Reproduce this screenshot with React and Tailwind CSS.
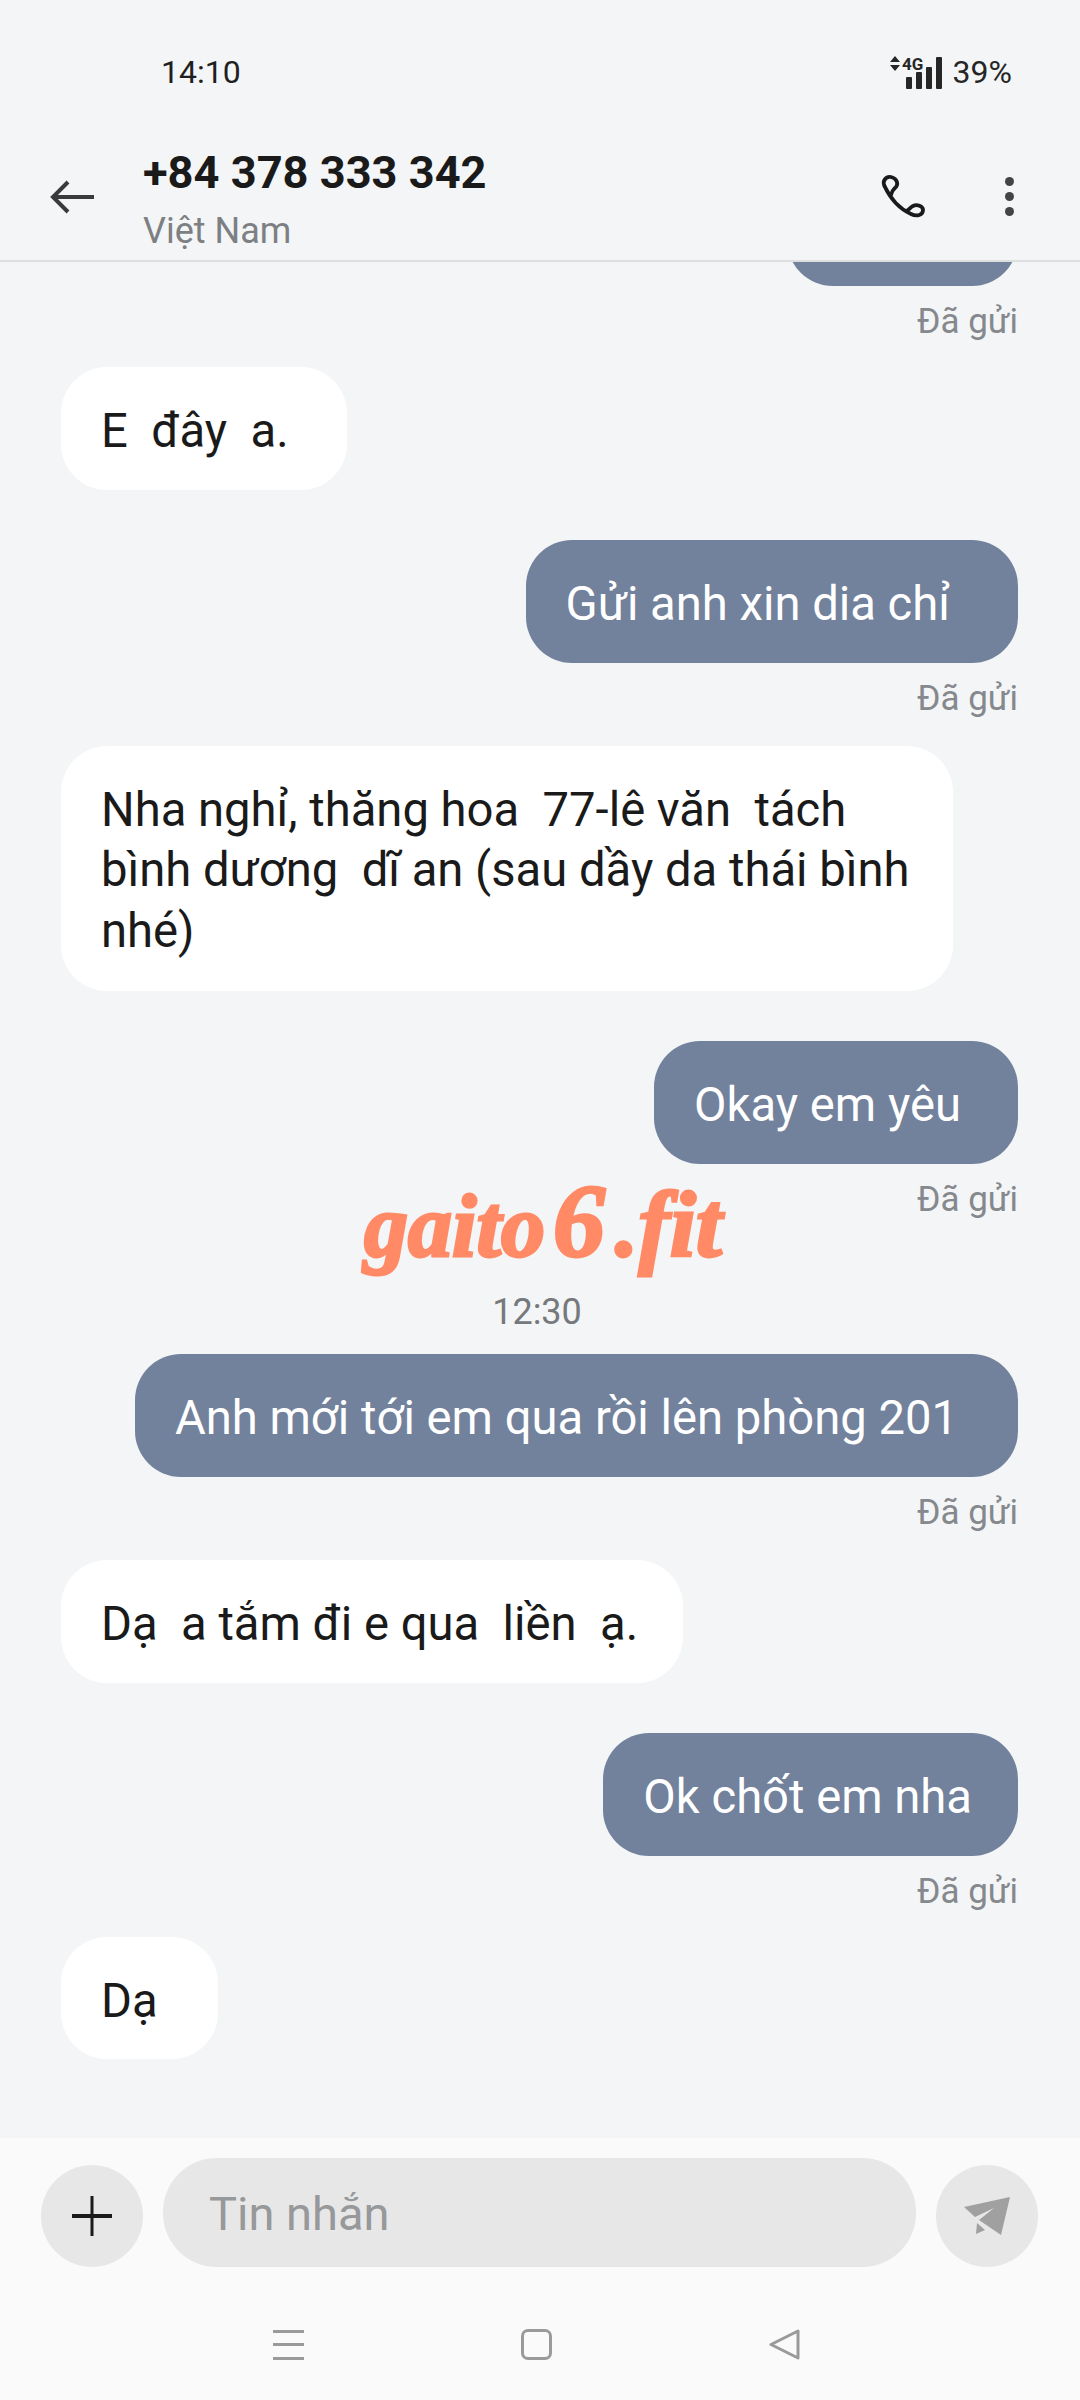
const font = "font-['Roboto','Noto_Sans',sans-serif]";

function Sent({ text, pad, first, tail = "mb-[25px]" }) {
  return (
    <div className={`flex flex-col items-end pr-[62px] ${first ? "" : "mt-[50px]"}`}>
      <div className={`h-[123px] whitespace-pre rounded-[46px] bg-[#72819c] pl-[40px] pt-[34px] text-[47.2px] leading-[60.5px] text-white ${pad}`}>
        {text}
      </div>
      <p className={`mt-[14px] text-[35px] leading-[44px] text-[#85888c] ${tail}`}>Đã gửi</p>
    </div>
  );
}

function Received({ text, pad }) {
  return (
    <div className="flex justify-start pl-[61px]">
      <div className={`whitespace-pre rounded-[46px] bg-white pl-[40px] pt-[34px] text-[47.2px] leading-[60.5px] text-[#1a1a1a] ${pad}`}>
        {text}
      </div>
    </div>
  );
}

function SignalIcon() {
  return (
    <svg width="56" height="34" viewBox="0 0 56 34" className="text-[#262626]" fill="currentColor">
      <path d="M1 7l5-6 5 6zM1 10h10l-5 6z" />
      <rect x="17" y="22" width="6" height="12" rx="1" />
      <rect x="27" y="17" width="6" height="17" rx="1" />
      <rect x="37" y="12" width="6" height="22" rx="1" />
      <rect x="47" y="2" width="6" height="32" rx="1" />
      <text x="13" y="15" fontSize="17" fontWeight="700" fontFamily="Roboto, sans-serif">4G</text>
    </svg>
  );
}

export default function App() {
  return (
    <div className={`${font} relative flex h-[2400px] w-[1080px] flex-col overflow-hidden bg-[#f3f5f7]`}>
      {/* status bar */}
      <div className="flex h-[144px] shrink-0 items-center justify-between pl-[161px] pr-[68px]">
        <span className="text-[32px] text-[#1f1f1f]">14:10</span>
        <div className="flex items-center gap-[8px]">
          <SignalIcon />
          <span className="text-[32px] text-[#262626]">39%</span>
        </div>
      </div>

      {/* header */}
      <header className="flex h-[118px] shrink-0 items-start border-b-2 border-[#dcdee0] pl-[50px]">
        <svg width="44" height="34" viewBox="0 0 44 34" className="mt-[36px]" fill="none" stroke="#3a3a3a" strokeWidth="4">
          <path d="M44 17H3M18 2L3 17l15 15" />
        </svg>
        <div className="ml-[49px] w-[737px]">
          <h1 className="text-[45.2px] font-bold leading-[58px] text-[#1a1a1a]">+84 378 333 342</h1>
          <p className="mt-[5px] text-[36px] leading-[48px] text-[#7d8083]">Việt Nam</p>
        </div>
        <svg width="46" height="46" viewBox="0 0 46 46" className="mt-[30px]" fill="none" stroke="#1a1a1a" strokeWidth="3.8" strokeLinecap="round">
          <path d="M4.5 12C10 24 18 34 31 40c6 3 12 1 12-4 0-4-6-6-10-4-3 1.500-4 4-6 4.500" />
          <path d="M4.500 12C2 7 6 2 11 3c5 1 8 6 5 10-2 2-4 3-5 8" />
        </svg>
        <div className="ml-[79px] mt-[33px] flex flex-col gap-[6px]">
          <span className="h-[9px] w-[9px] rounded-full bg-[#444444]" />
          <span className="h-[9px] w-[9px] rounded-full bg-[#444444]" />
          <span className="h-[9px] w-[9px] rounded-full bg-[#444444]" />
        </div>
      </header>

      {/* messages */}
      <main className="relative flex-1 overflow-hidden">
        <div className="-mt-[99px] flex flex-col items-end pr-[62px]">
          <div className="h-[123px] w-[231px] rounded-[46px] bg-[#72819c]" />
          <p className="mt-[14px] mb-[23px] text-[35px] leading-[44px] text-[#85888c]">Đã gửi</p>
        </div>
        <Received text="E  đây  a." pad="pr-[58px] pb-[28px]" />
        <Sent text="Gửi anh xin dia chỉ" pad="pr-[68px]" />
        <Received text={"Nha nghỉ, thăng hoa  77-lê văn  tách\nbình dương  dĩ an (sau dầy da thái bình\nnhé)"} pad="pr-[44px] pb-[30px]" />
        <Sent text="Okay em yêu" pad="pr-[57px]" />
        <p className="mt-[43px] mb-[20px] pr-[6px] text-center text-[36px] leading-[44px] text-[#76797c]">12:30</p>
        <Sent first text="Anh mới tới em qua rồi lên phòng 201" pad="pr-[60px]" />
        <Received text="Dạ  a tắm đi e qua  liền  ạ." pad="pr-[45px] pb-[28px]" />
        <Sent text="Ok chốt em nha" pad="pr-[46px]" tail="mb-[23px]" />
        <Received text="Dạ" pad="pr-[60px] pb-[28px]" />
      </main>

      {/* composer */}
      <footer className="h-[262px] shrink-0 bg-[#fafafa]">
        <div className="flex items-end gap-[20px] pl-[41px] pr-[42px] pt-[20px]">
          <button type="button" className="flex h-[102px] w-[102px] items-center justify-center rounded-full bg-[#e7e7e7]">
            <svg width="40" height="40" viewBox="0 0 40 40" fill="#1a1a1a">
              <rect x="18.500" y="0" width="3" height="40" />
              <rect x="0" y="18" width="40" height="4" />
            </svg>
          </button>
          <div className="flex h-[109px] flex-1 items-center rounded-[54px] bg-[#e7e7e7] pl-[46px] pt-[4px] text-[47px] text-[#96989a]">
            Tin nhắn
          </div>
          <button type="button" className="flex h-[102px] w-[102px] items-center justify-center rounded-full bg-[#e7e7e7]">
            <svg width="46" height="38" viewBox="0 0 46 38" fill="#a0a0a0">
              <path d="M46 0L0 10l11 10 19-9-15 12 22 15zM13 26l8 7-9 4z" />
            </svg>
          </button>
        </div>
        <div className="mt-[62px] flex items-center gap-[217px] pl-[273px]">
          <div className="flex h-[30px] w-[31px] flex-col justify-between">
            <span className="h-[3px] bg-[#9a9a9a]" />
            <span className="h-[3px] bg-[#9a9a9a]" />
            <span className="h-[3px] bg-[#9a9a9a]" />
          </div>
          <div className="h-[31px] w-[31px] rounded-[7px] border-[3px] border-[#9a9a9a]" />
          <svg width="31" height="31" viewBox="0 0 31 31" fill="none" stroke="#9a9a9a" strokeWidth="3" strokeLinejoin="round">
            <path d="M29 2v27L2 15.500z" />
          </svg>
        </div>
      </footer>

      {/* watermark */}
      <div className="absolute left-[364px] top-[1166px] whitespace-pre font-['Liberation_Serif',serif] text-[88px] font-bold italic leading-[110px] text-[#ff8a65] [-webkit-text-stroke:3px_#ff8a65]">
        gaito<span className="ml-[8px] text-[104px]">6</span><span className="ml-[10px] text-[94px]">.fit</span>
      </div>
    </div>
  );
}
